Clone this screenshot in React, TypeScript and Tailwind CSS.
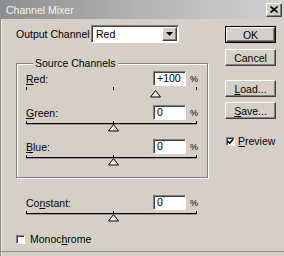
import React from "react";

const raised =
  "border border-t-white border-l-white border-r-[#404040] border-b-[#404040] shadow-[inset_-1px_-1px_0_#808080]";
const sunken =
  "border border-t-[#808080] border-l-[#808080] border-r-white border-b-white shadow-[inset_1px_1px_0_#404040]";

function Slider({ value, line = true }: { value: number; line?: boolean }) {
  const center = 87 + value * 0.42;
  return (
    <div className="relative mt-[3px] h-[16px] w-[171px]">
      {line && <div className="h-px w-full bg-black shadow-[0_1px_0_#9a9a9a]" />}
      <div className="absolute left-0 top-[-2px] h-[3px] w-px bg-black" />
      <div className="absolute left-[87px] top-[-2px] h-[3px] w-px bg-black" />
      <div className="absolute left-[170px] top-[-2px] h-[3px] w-px bg-black" />
      <svg
        className="absolute top-[1px]"
        style={{ left: center - 5 }}
        width="11"
        height="8"
        viewBox="0 0 11 8"
      >
        <polygon points="5.5,0.5 10.5,7 0.5,7" fill="#ececec" stroke="#000" strokeWidth="1" />
      </svg>
    </div>
  );
}

function Row({
  label,
  value,
  text,
  line = true,
}: {
  label: React.ReactNode;
  value: number;
  text: string;
  line?: boolean;
}) {
  return (
    <div className="w-[171px]">
      <div className="flex h-[15px] items-center">
        <span className="flex-1 leading-[12px]">{label}</span>
        <div className={`h-[15px] w-[33px] bg-white pl-[3px] leading-[13px] ${sunken}`}>{text}</div>
        <span className="ml-[4px] w-[7px] whitespace-nowrap text-[9px] leading-[12px]">%</span>
      </div>
      <Slider value={value} line={line} />
    </div>
  );
}

function Btn({ children, def = false, cls = "" }: { children: React.ReactNode; def?: boolean; cls?: string }) {
  if (def) {
    return (
      <div className={`h-[17px] w-[51px] border border-black ${cls}`}>
        <div className={`flex h-full w-full items-center justify-center leading-[12px] ${raised}`}>{children}</div>
      </div>
    );
  }
  return (
    <div className={`flex h-[17px] w-[51px] items-center justify-center leading-[12px] ${raised} ${cls}`}>
      {children}
    </div>
  );
}

export default function App() {
  return (
    <div className="relative flex h-[256px] w-[284px] flex-col overflow-hidden bg-[#d4d0c8] font-['Liberation_Sans',Arial,sans-serif] text-[10.5px] text-black">
      {/* title bar */}
      <div className="flex h-[19px] w-full shrink-0 items-center bg-gradient-to-r from-[#8e8e8e] via-[#b4b4b4] to-[#d2d2d2] pl-[6px] pr-[2px]">
        <span className="flex-1 leading-[12px] text-[#f4f4f4]">Channel Mixer</span>
        <div className={`flex h-[14px] w-[16px] items-center justify-center bg-[#d4d0c8] ${raised}`}>
          <svg width="8" height="7" viewBox="0 0 8 7">
            <path d="M0.5 0.5 L7.5 6.5 M7.5 0.5 L0.5 6.5" stroke="#000" strokeWidth="1.6" />
          </svg>
        </div>
      </div>

      {/* body */}
      <div className="flex flex-1 border-l border-[#8a8a8a] pl-[15px] pt-[6px] shadow-[inset_1px_0_0_#e8e8e8]">
        {/* left column */}
        <div className="flex w-[192px] flex-col">
          <div className="flex h-[18px] items-center">
            <span className="w-[75px] leading-[12px]">Output Channel</span>
            <div className={`flex h-[18px] w-[88px] items-center bg-white ${sunken}`}>
              <span className="flex-1 pl-[4px] leading-[12px]">Red</span>
              <div className={`mr-px flex h-[14px] w-[15px] items-center justify-center bg-[#d4d0c8] ${raised}`}>
                <svg width="7" height="4" viewBox="0 0 7 4">
                  <polygon points="0,0 7,0 3.5,4" fill="#000" />
                </svg>
              </div>
            </div>
          </div>

          {/* group box */}
          <div className="relative mt-[20px] h-[115px] w-[192px] border border-[#808080] pl-[9px] pt-[7px] shadow-[inset_1px_1px_0_#fff,1px_1px_0_#fff]">
            <span className="absolute left-[16px] top-[-7px] bg-[#d4d0c8] px-[2px] leading-[12px]">
              Source Channels
            </span>
            <Row
              label={
                <>
                  <u>R</u>ed:
                </>
              }
              value={100}
              text="+100"
              line={false}
            />
            <Row
              label={
                <>
                  <u>G</u>reen:
                </>
              }
              value={0}
              text="0"
            />
            <Row
              label={
                <>
                  <u>B</u>lue:
                </>
              }
              value={0}
              text="0"
            />
          </div>

          <div className="mt-[17px] pl-[10px]">
            <Row
              label={
                <>
                  Co<u>n</u>stant:
                </>
              }
              value={0}
              text="0"
            />
          </div>

          <div className="mt-[4px] flex items-center">
            <div className={`h-[9px] w-[9px] bg-white ${sunken}`} />
            <span className="ml-[5px] leading-[12px]">
              Monoc<u>h</u>rome
            </span>
          </div>
        </div>

        {/* right column */}
        <div className="ml-[17px] flex flex-col pt-[1px]">
          <Btn def>OK</Btn>
          <Btn cls="mt-[6px]">Cancel</Btn>
          <Btn cls="mt-[14px]">
            <span>
              <u>L</u>oad...
            </span>
          </Btn>
          <Btn cls="mt-[5px]">
            <span>
              <u>S</u>ave...
            </span>
          </Btn>
          <div className="mt-[16px] flex items-center pl-px">
            <div className={`flex h-[9px] w-[9px] items-center justify-center bg-white ${sunken}`}>
              <svg width="7" height="7" viewBox="0 0 7 7">
                <path d="M0.8 3.2 L2.8 5.2 L6.2 1.2" stroke="#000" strokeWidth="1.5" fill="none" />
              </svg>
            </div>
            <span className="ml-[3px] leading-[12px]">
              <u>P</u>review
            </span>
          </div>
        </div>
      </div>

      {/* bottom frame line */}
      <div className="absolute bottom-[4px] left-0 h-px w-full bg-[#8a8a8a]" />
    </div>
  );
}
